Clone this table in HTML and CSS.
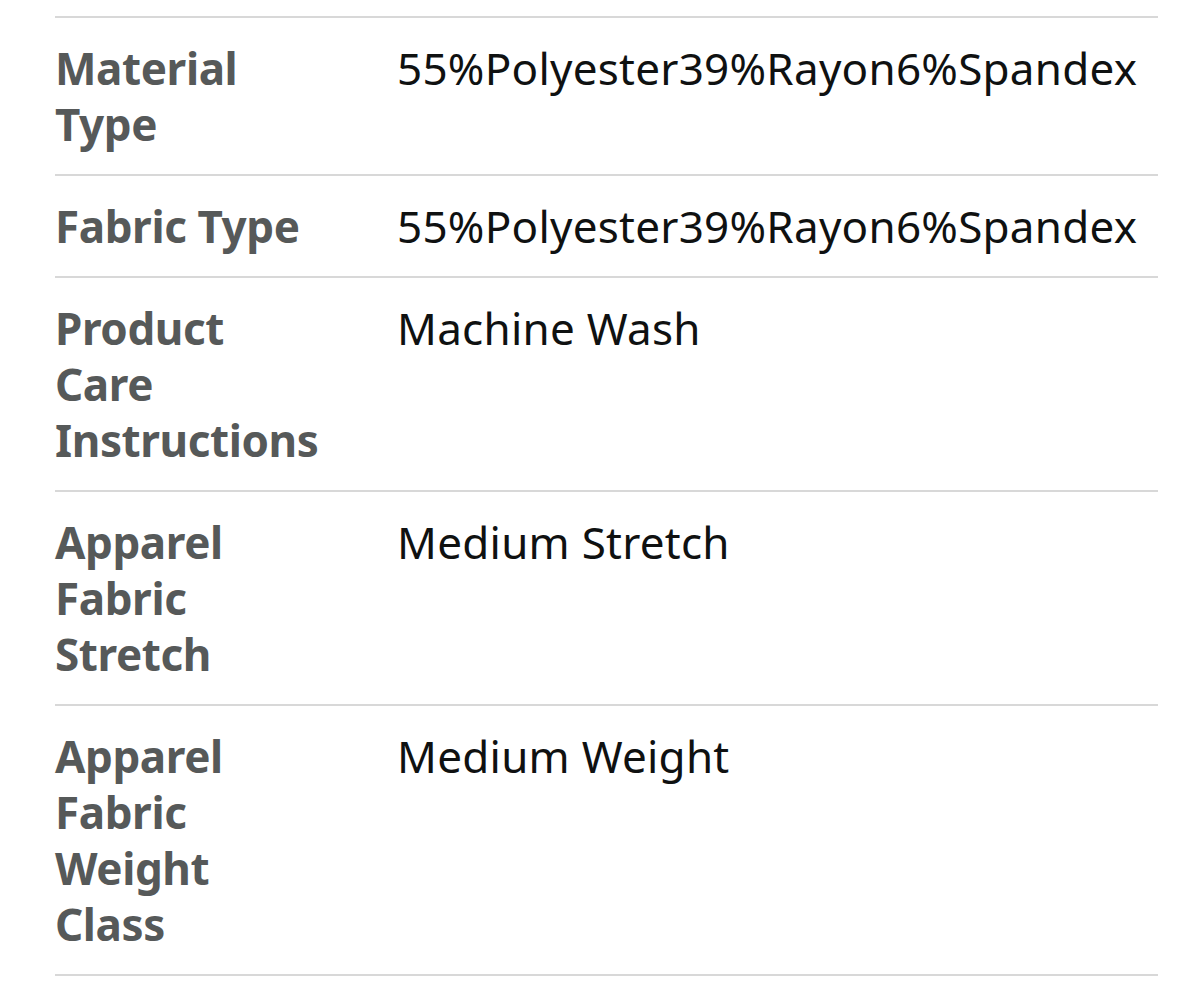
FILE: index.html
```html
<!DOCTYPE html>
<html>
<head>
<meta charset="utf-8">
<link rel="stylesheet" href="styles.css">
</head>
<body>
<div class="specs">
  <div class="row"><div class="label">Material Type</div><div class="value">55%Polyester39%Rayon6%Spandex</div></div>
  <div class="row"><div class="label">Fabric Type</div><div class="value">55%Polyester39%Rayon6%Spandex</div></div>
  <div class="row"><div class="label">Product Care Instructions</div><div class="value">Machine Wash</div></div>
  <div class="row"><div class="label">Apparel Fabric Stretch</div><div class="value">Medium Stretch</div></div>
  <div class="row"><div class="label">Apparel Fabric Weight Class</div><div class="value">Medium Weight</div></div>
</div>
</body>
</html>
```
FILE: styles.css
```css
html, body {
  margin: 0;
  padding: 0;
  background: #ffffff;
}
.specs {
  margin: 16px 42px 0 55px;
  border-top: 2px solid #d8d8d8;
  font-family: "Noto Sans", sans-serif;
  font-size: 44px;
  line-height: 56px;
}
.row {
  display: grid;
  grid-template-columns: 342px 1fr;
  padding: 22px 0;
  border-bottom: 2px solid #d8d8d8;
}
.label {
  color: #565959;
  font-weight: 700;
  letter-spacing: -0.4px;
  padding-right: 72px;
}
.value {
  color: #0f1111;
  letter-spacing: 0.25px;
}
```
